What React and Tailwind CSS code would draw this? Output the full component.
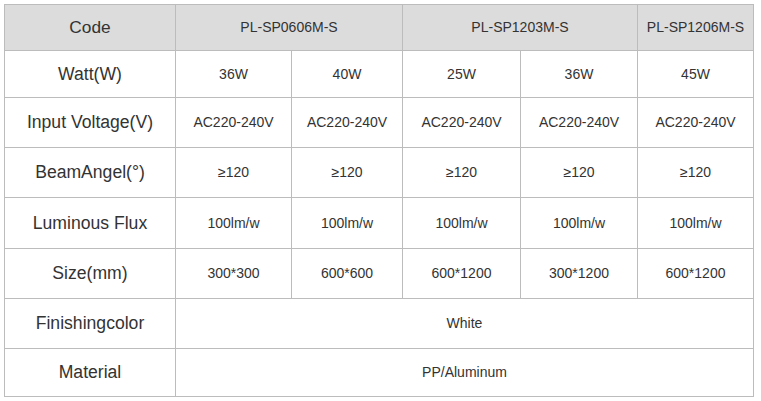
import React from "react";

const rows = [
  { label: "Watt(W)", cells: ["36W", "40W", "25W", "36W", "45W"], h: "h-[46px]" },
  { label: "Input Voltage(V)", cells: ["AC220-240V", "AC220-240V", "AC220-240V", "AC220-240V", "AC220-240V"], h: "h-[49px]" },
  { label: "BeamAngel(°)", cells: ["≥120", "≥120", "≥120", "≥120", "≥120"], h: "h-[49px]" },
  { label: "Luminous Flux", cells: ["100lm/w", "100lm/w", "100lm/w", "100lm/w", "100lm/w"], h: "h-[50px]" },
  { label: "Size(mm)", cells: ["300*300", "600*600", "600*1200", "300*1200", "600*1200"], h: "h-[49px]" },
];

const cell = "bg-white flex items-center justify-center text-[#333] text-[14px]";
const label = "bg-white flex items-center justify-center text-[#333] text-[17.6px]";
const head = "bg-[#dcdcdc] flex items-center justify-center text-[#333]";

export default function App() {
  return (
    <div className="w-[761px] h-[401px] bg-white pl-[4px] pt-[4px]" style={{ fontFamily: '"Liberation Sans", Arial, sans-serif' }}>
      <div className="grid w-[750px] grid-cols-[170px_115px_110px_117px_116px_115px] gap-[1px] bg-[#bcbcbc] p-[1px]">
        <div className={`${head} h-[45px] text-[17.3px]`}>Code</div>
        <div className={`${head} col-span-2 text-[14px]`}>PL-SP0606M-S</div>
        <div className={`${head} col-span-2 text-[14px]`}>PL-SP1203M-S</div>
        <div className={`${head} text-[14px]`}>PL-SP1206M-S</div>
        {rows.map((r) => (
          <React.Fragment key={r.label}>
            <div className={`${label} ${r.h}`}>{r.label}</div>
            {r.cells.map((c, i) => (
              <div key={i} className={cell}>{c}</div>
            ))}
          </React.Fragment>
        ))}
        <div className={`${label} h-[49px]`}>Finishingcolor</div>
        <div className={`${cell} col-span-5`}>White</div>
        <div className={`${label} h-[47px]`}>Material</div>
        <div className={`${cell} col-span-5`}>PP/Aluminum</div>
      </div>
    </div>
  );
}
